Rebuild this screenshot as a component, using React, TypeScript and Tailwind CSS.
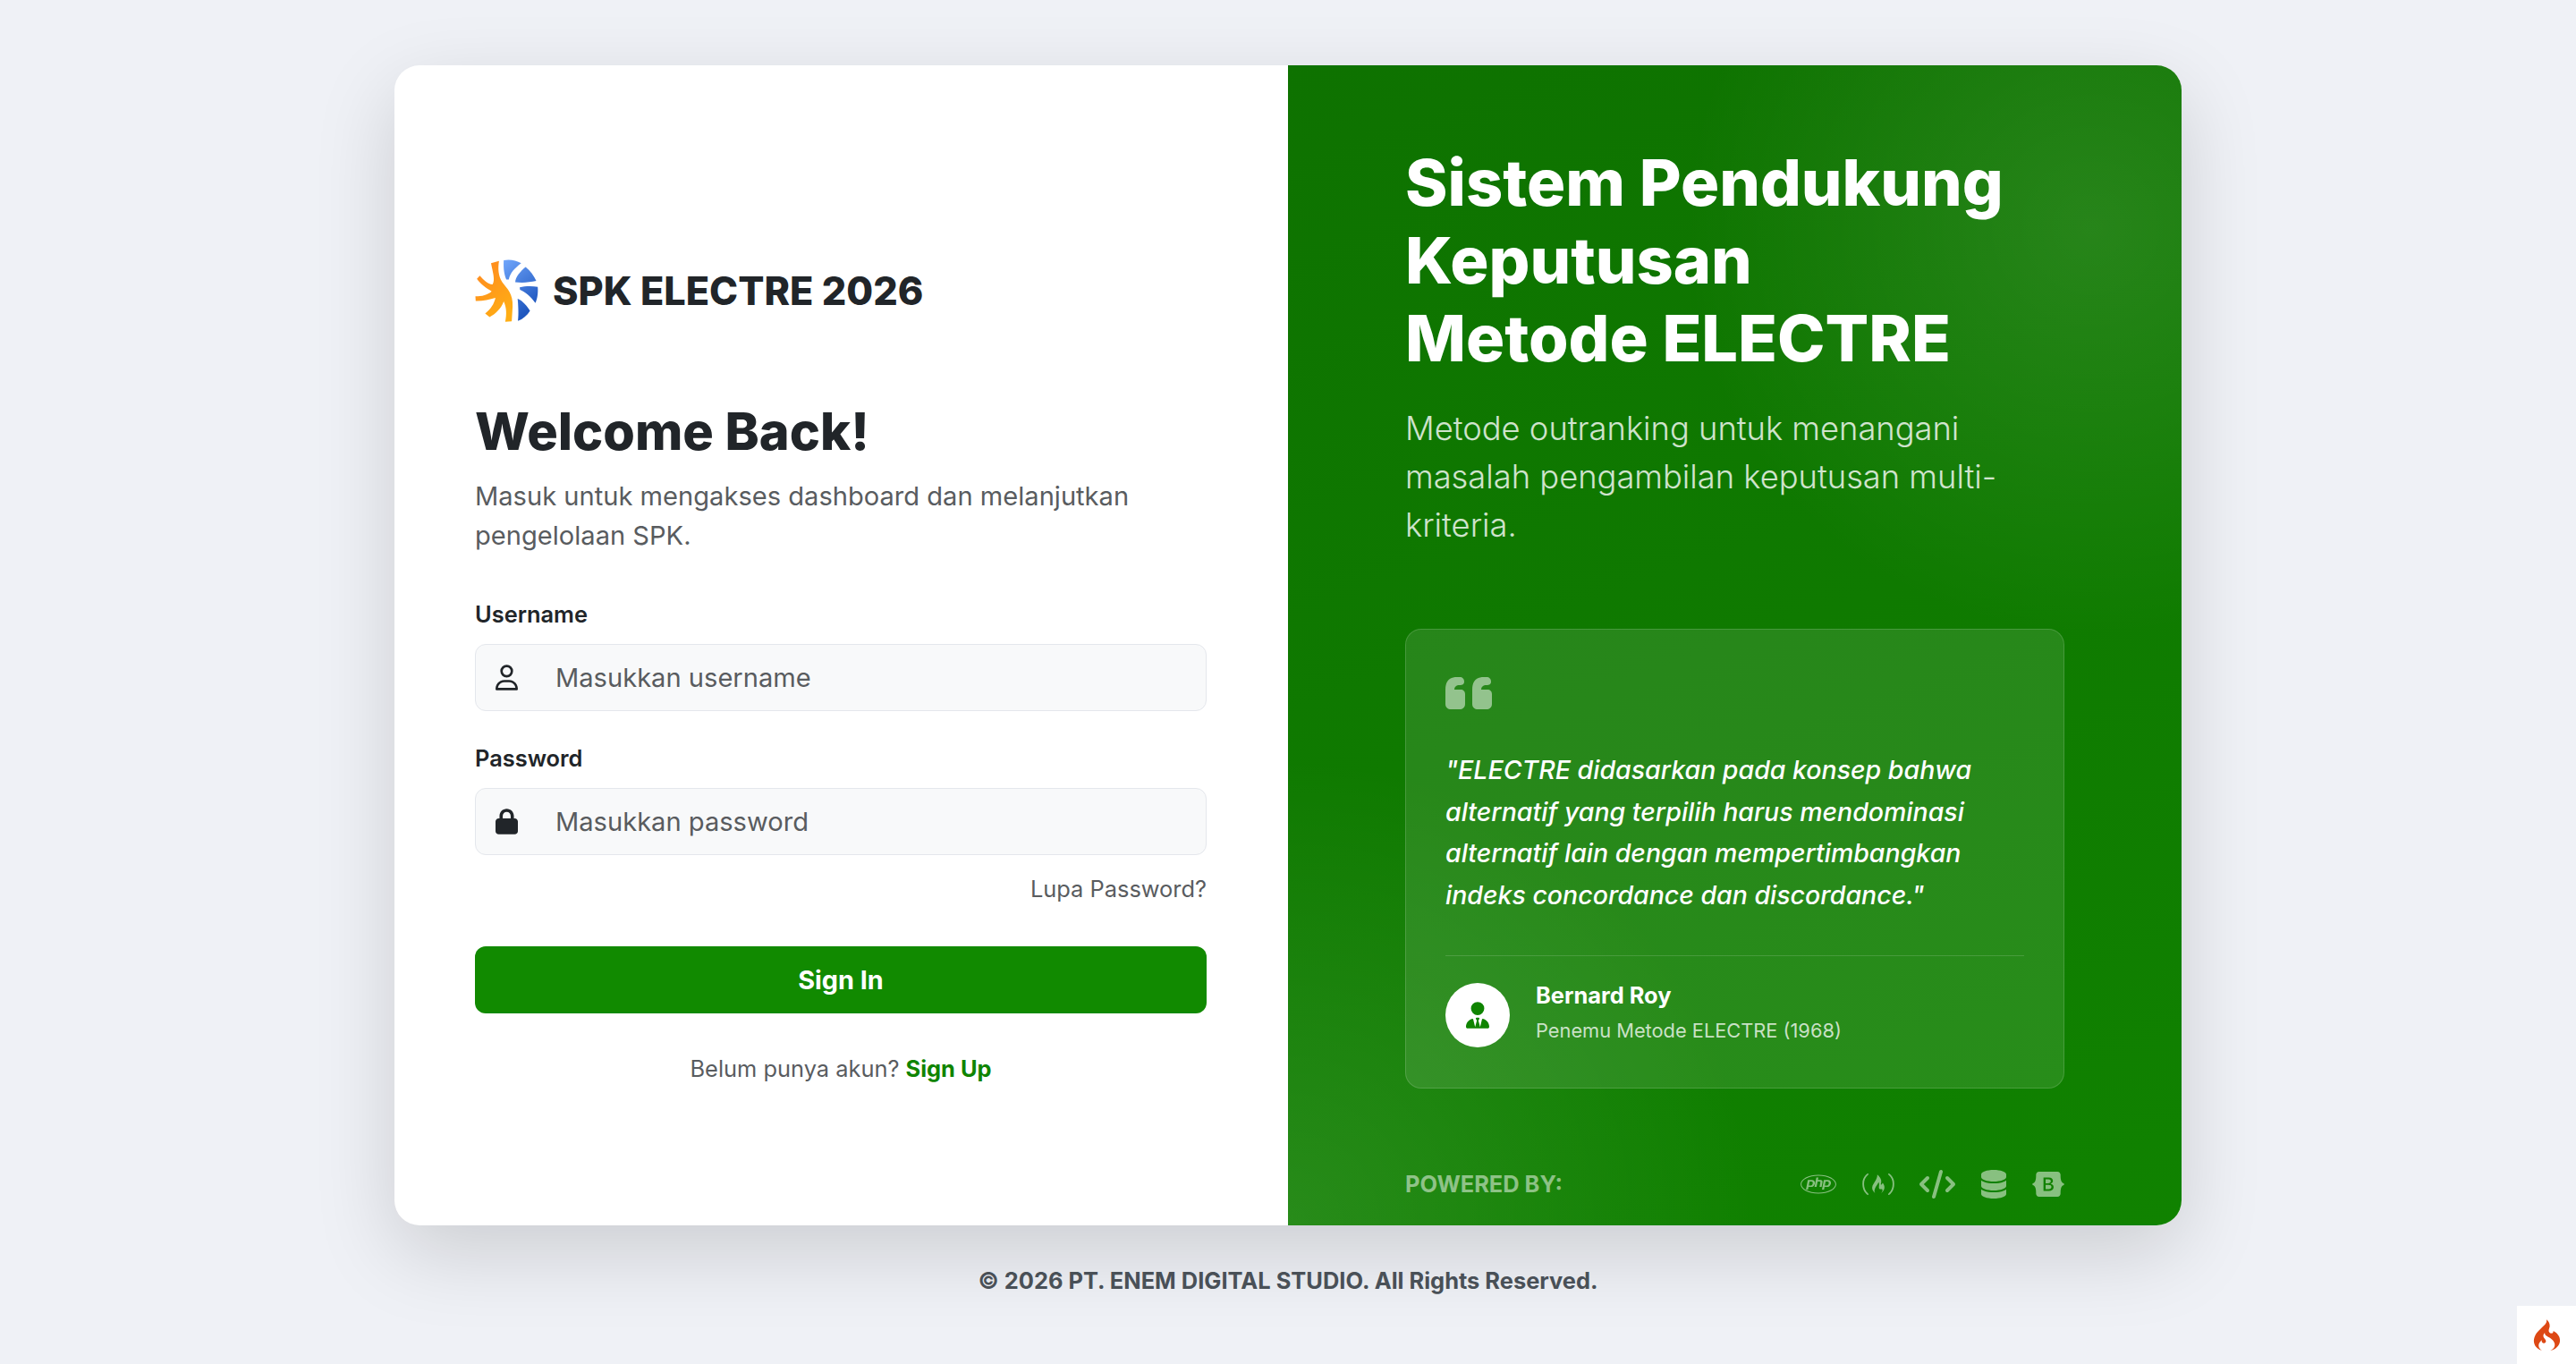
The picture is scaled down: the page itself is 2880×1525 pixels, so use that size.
import React from 'react';
import { FaRegUser, FaLock, FaUserTie, FaPhp, FaFreeCodeCamp, FaCode, FaDatabase, FaBootstrap } from 'react-icons/fa6';
import { SiCodeigniter } from 'react-icons/si';

const Logo = () => (
  <svg viewBox="36 30 214 212" className="w-[71px] h-[70px] shrink-0">
    <defs>
      <linearGradient id="org" gradientUnits="userSpaceOnUse" x1="40" y1="60" x2="165" y2="200">
        <stop offset="0" stopColor="#ff8a1f" />
        <stop offset="1" stopColor="#ffae14" />
      </linearGradient>
      <linearGradient id="blu" gradientUnits="userSpaceOnUse" x1="135" y1="35" x2="250" y2="175">
        <stop offset="0" stopColor="#6ea4fa" />
        <stop offset="1" stopColor="#1f57bf" />
      </linearGradient>
    </defs>
    <path
      fill="url(#org)"
      d="M90 43 L117 35 C113 60 114 85 128 107 C145 130 165 145 163 190 L160 240 L138 241 C143 215 143 195 133 172 C125 195 105 215 85 225 L70 213 C90 198 100 180 105 160 C85 165 60 172 38 171 L37 155 C60 155 78 150 92 138 C75 128 55 115 42 96 L52 85 C65 100 78 112 95 115 C105 100 95 70 90 43 Z"
    />
    <g fill="url(#blu)">
      <path d="M133 33 C150 29 175 32 192 43 C170 60 155 75 150 98 L142 98 C135 85 131 60 133 33Z" />
      <path d="M207 56 C222 68 235 85 243 103 C220 108 195 110 172 107 C172 90 190 70 207 56Z" />
      <path d="M187 125 C205 120 228 120 248 123 C250 145 246 165 240 178 C225 155 205 140 188 133Z" />
      <path d="M180 163 C198 170 212 188 222 204 C212 220 198 232 181 238 C184 215 182 185 180 163Z" />
    </g>
  </svg>
);

const Field = ({ label, placeholder, icon }: { label: string; placeholder: string; icon: React.ReactNode }) => (
  <div>
    <label className="block mb-[14px] text-[25.4px] font-semibold leading-[38px] text-[#212529]">{label}</label>
    <div className="flex items-center h-[75px] rounded-[12px] border-[1.8px] border-[#e4e7ec] bg-[#f8f9fa] pl-[21px]">
      <span className="w-[26px] flex justify-center text-[#212529]">{icon}</span>
      <span className="ml-[42px] text-[29.1px] text-[#595c5f]">{placeholder}</span>
    </div>
  </div>
);

const App = () => {
  return (
    <div className="relative h-[1525px] overflow-hidden bg-[#eff1f6] font-['Inter',sans-serif] flex flex-col items-center pt-[73px]">
      <div className="flex w-[1998px] h-[1297px] rounded-[28px] overflow-hidden bg-white shadow-[0_30px_90px_rgba(0,0,0,0.15)]">
        <div className="w-[999px] pl-[90px] pr-[91px] pt-[217px] flex flex-col">
          <div className="flex items-center gap-[16px] mb-[88px]">
            <Logo />
            <span className="text-[43.2px] font-extrabold text-[#212529]">SPK ELECTRE 2026</span>
          </div>
          <h1 className="text-[57.6px] font-extrabold leading-[69px] text-[#212529] mb-[16px]">Welcome Back!</h1>
          <p className="text-[29.1px] leading-[44px] text-[#595c5f] mb-[47px]">
            Masuk untuk mengakses dashboard dan melanjutkan pengelolaan SPK.
          </p>
          <div className="flex flex-col gap-[34px]">
            <Field label="Username" placeholder="Masukkan username" icon={<FaRegUser className="w-[25px] h-[29px]" />} />
            <Field label="Password" placeholder="Masukkan password" icon={<FaLock className="w-[25px] h-[29px]" />} />
          </div>
          <div className="text-right text-[25.4px] leading-[38px] text-[#595c5f] mt-[19px] mb-[45px]">Lupa Password?</div>
          <button className="h-[75px] rounded-[12px] bg-[#118a00] text-white text-[28.8px] font-bold">Sign In</button>
          <p className="mt-[43px] text-center text-[25.4px] leading-[38px] text-[#595c5f]">
            Belum punya akun? <span className="font-bold text-[#0f8400]">Sign Up</span>
          </p>
        </div>
        <div className="w-[999px] px-[131px] pt-[87px] bg-[radial-gradient(circle_at_90%_14%,rgba(255,255,255,0.1),transparent_32%),radial-gradient(circle_at_0%_100%,rgba(255,255,255,0.1),transparent_32%),linear-gradient(160deg,#0e7200,#108200)] text-white flex flex-col">
          <h2 className="text-[72px] font-extrabold leading-[87px]">
            Sistem Pendukung Keputusan<br />Metode ELECTRE
          </h2>
          <p className="mt-[31px] text-[36.3px] font-light leading-[54px] text-white/80">
            Metode outranking untuk menangani masalah pengambilan keputusan multi-kriteria.
          </p>
          <div className="mt-[89px] h-[514px] rounded-[18px] border-[1.8px] border-white/15 bg-white/10 p-[44px] flex flex-col">
            <svg viewBox="0 0 52 36" className="w-[52px] h-[36px] mt-[9px] shrink-0 fill-white/50">
              <path d="M0 30V14C0 5 4 0 13 0H16C19 0 21 2 21 5S19 9 16 9C12 9 10 11 10 14H17C20 14 22 16 22 19V30C22 34 19 36 16 36H6C3 36 0 34 0 30Z" />
              <path d="M30 30V14C30 5 34 0 43 0H46C49 0 51 2 51 5S49 9 46 9C42 9 40 11 40 14H47C50 14 52 16 52 19V30C52 34 49 36 46 36H36C33 36 30 34 30 30Z" />
            </svg>
            <p className="mt-[45px] text-[28.5px] leading-[46.5px] italic font-medium">
              "ELECTRE didasarkan pada konsep bahwa alternatif yang terpilih harus mendominasi alternatif lain dengan mempertimbangkan indeks concordance dan discordance."
            </p>
            <div className="mt-[44px] pt-[30px] border-t-[1.8px] border-white/15 flex items-center gap-[29px]">
              <div className="w-[72px] h-[72px] rounded-full bg-white flex items-center justify-center text-[#0f8400]">
                <FaUserTie className="w-[26px] h-[30px]" />
              </div>
              <div className="-mt-[6px]">
                <div className="text-[25.4px] font-bold leading-[34px]">Bernard Roy</div>
                <div className="mt-[5px] text-[21.8px] leading-[34px] text-white/75">Penemu Metode ELECTRE (1968)</div>
              </div>
            </div>
          </div>
          <div className="mt-[88px] flex items-center justify-between text-white/50">
            <span className="text-[25.4px] font-bold">POWERED BY:</span>
            <div className="flex items-center gap-[28.8px]">
              <FaPhp className="w-[40px] h-[32px]" />
              <FaFreeCodeCamp className="w-[36px] h-[32px]" />
              <FaCode className="w-[40px] h-[32px]" />
              <FaDatabase className="w-[28px] h-[32px]" />
              <FaBootstrap className="w-[36px] h-[32px]" />
            </div>
          </div>
        </div>
      </div>
      <div className="mt-[43px] text-[25.45px] font-bold text-[#495057]">© 2026 PT. ENEM DIGITAL STUDIO. All Rights Reserved.</div>
      <div className="absolute right-0 bottom-0 w-[66px] h-[65px] bg-white flex items-center justify-center text-[#dd4814] text-[35px]">
        <SiCodeigniter />
      </div>
    </div>
  );
};

export default App;
